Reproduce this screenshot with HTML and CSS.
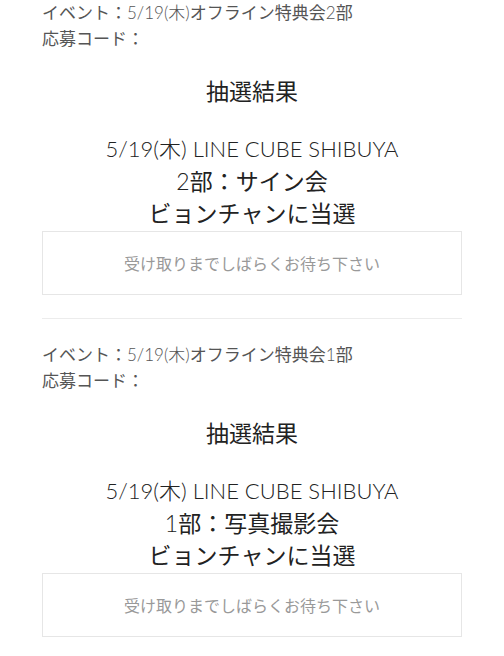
FILE: index.html
```html
<!DOCTYPE html>
<html lang="ja">
<head>
<meta charset="utf-8">
<link rel="stylesheet" href="styles.css">
</head>
<body>
<div class="list">
  <section class="entry">
    <div class="info">
      <p>イベント：<span class="lat">5/19(木)</span>オフライン特典会<span class="lat">2</span>部</p>
      <p>応募コード：</p>
    </div>
    <h2 class="title">抽選結果</h2>
    <div class="result">
      <p class="venue">5/19(木) LINE CUBE SHIBUYA</p>
      <p><span class="lat">2</span>部：サイン会</p>
      <p>ビョンチャンに当選</p>
    </div>
    <div class="notice">受け取りまでしばらくお待ち下さい</div>
  </section>
  <section class="entry">
    <div class="info">
      <p>イベント：<span class="lat">5/19(木)</span>オフライン特典会<span class="lat">1</span>部</p>
      <p>応募コード：</p>
    </div>
    <h2 class="title">抽選結果</h2>
    <div class="result">
      <p class="venue">5/19(木) LINE CUBE SHIBUYA</p>
      <p><span class="lat">1</span>部：写真撮影会</p>
      <p>ビョンチャンに当選</p>
    </div>
    <div class="notice">受け取りまでしばらくお待ち下さい</div>
  </section>
</div>
</body>
</html>
```

FILE: styles.css
```css
html, body {
  margin: 0;
  padding: 0;
  background: #fff;
}
body {
  font-family: Lato, "Noto Sans CJK JP", sans-serif;
  font-weight: 400;
  color: #222;
}
p { margin: 0; }
.lat { font-weight: 300; }
.list {
  padding: 0 42px;
}
.entry {
  padding-bottom: 23px;
  border-bottom: 1px solid #ececec;
}
.entry + .entry {
  padding-top: 23px;
}
.info {
  font-size: 17px;
  line-height: 26px;
  color: #555;
}
.title {
  margin: 23px 0 0;
  font-size: 23px;
  font-weight: 400;
  line-height: 32px;
  text-align: center;
  color: #222;
}
.result {
  margin-top: 26px;
  font-size: 23px;
  line-height: 32px;
  text-align: center;
  color: #222;
}
.result .venue {
  font-size: 22px;
  font-weight: 300;
}
.notice {
  margin-top: 2px;
  height: 62px;
  border: 1px solid #e6e6e6;
  display: flex;
  align-items: center;
  justify-content: center;
  font-size: 16px;
  color: #999;
}
```
